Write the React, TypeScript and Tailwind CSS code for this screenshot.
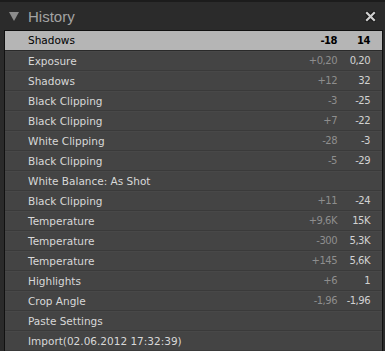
import React from 'react';

type Step = { name: string; delta?: string; value?: string };

const steps: Step[] = [
  { name: 'Shadows', delta: '-18', value: '14' },
  { name: 'Exposure', delta: '+0,20', value: '0,20' },
  { name: 'Shadows', delta: '+12', value: '32' },
  { name: 'Black Clipping', delta: '-3', value: '-25' },
  { name: 'Black Clipping', delta: '+7', value: '-22' },
  { name: 'White Clipping', delta: '-28', value: '-3' },
  { name: 'Black Clipping', delta: '-5', value: '-29' },
  { name: 'White Balance: As Shot' },
  { name: 'Black Clipping', delta: '+11', value: '-24' },
  { name: 'Temperature', delta: '+9,6K', value: '15K' },
  { name: 'Temperature', delta: '-300', value: '5,3K' },
  { name: 'Temperature', delta: '+145', value: '5,6K' },
  { name: 'Highlights', delta: '+6', value: '1' },
  { name: 'Crop Angle', delta: '-1,96', value: '-1,96' },
  { name: 'Paste Settings' },
  { name: 'Import(02.06.2012 17:32:39)' },
];

const HistoryRow = ({ step, selected }: { step: Step; selected: boolean }) => (
  <div
    className={`flex h-[20px] items-center border-b ${
      selected ? 'bg-[#b5b5b5] text-black border-[#2a2a2a]' : 'bg-[#444444] text-[#d8d8d8] border-[#3a3a3a] border-t border-t-[#484848]'
    }`}
  >
    <span className="pl-[23px] flex-1 text-[10.5px] leading-none">{step.name}</span>
    <span
      className={`w-[40px] text-right text-[10px] tracking-[-0.5px] leading-none ${
        selected ? 'text-black font-bold' : 'text-[#8e8e8e]'
      }`}
    >
      {step.delta}
    </span>
    <span
      className={`w-[45px] pr-[12px] text-right text-[10px] tracking-[-0.5px] leading-none ${
        selected ? 'text-black font-bold' : 'text-[#d2d2d2]'
      }`}
    >
      {step.value}
    </span>
  </div>
);

export default function App() {
  return (
    <div className="w-[385px] h-[351px] overflow-hidden bg-[#2b2b2b] border-t-2 border-[#1c1c1c] flex flex-col font-['DejaVu_Sans',sans-serif]">
      {/* Header */}
      <div className="h-[28px] flex items-center shrink-0">
        <svg width="10" height="9" viewBox="0 0 10 9" className="ml-[9px]">
          <path d="M0 0 H10 L5 9 Z" fill="#8c8c8c" />
        </svg>
        <span className="ml-[9px] text-[15px] leading-none text-[#a3a3a3] font-['Liberation_Sans',sans-serif]">
          History
        </span>
        <div className="flex-1" />
        <svg width="11" height="11" viewBox="0 0 11 11" className="mr-[9px]">
          <path d="M2 2 L9 9 M9 2 L2 9" stroke="#1a1a1a" strokeWidth="4.5" strokeLinecap="square" />
          <path d="M2 2 L9 9 M9 2 L2 9" stroke="#cfcfcf" strokeWidth="2.2" strokeLinecap="square" />
        </svg>
      </div>

      {/* List */}
      <div className="ml-[4px] mr-[2px] flex-1 border-l border-t border-r border-[#111111] bg-[#444444]">
        {steps.map((s, i) => (
          <HistoryRow key={i} step={s} selected={i === 0} />
        ))}
      </div>
    </div>
  );
}
